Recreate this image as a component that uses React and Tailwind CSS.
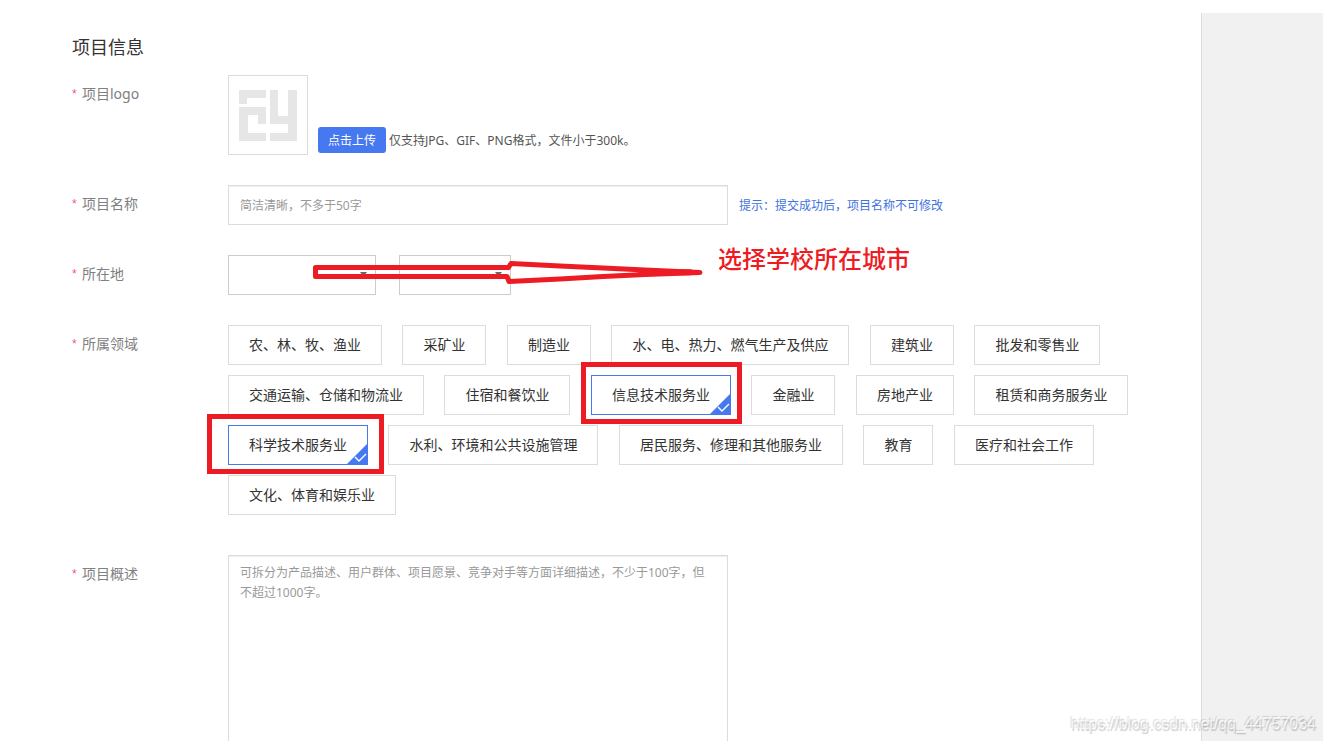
import React from 'react';

const FIELDS = [
  { name: '农、林、牧、渔业' },
  { name: '采矿业' },
  { name: '制造业' },
  { name: '水、电、热力、燃气生产及供应' },
  { name: '建筑业' },
  { name: '批发和零售业' },
  { name: '交通运输、仓储和物流业' },
  { name: '住宿和餐饮业' },
  { name: '信息技术服务业', mark: '-left-[11px] -right-3 -top-[14px] -bottom-[10px]' },
  { name: '金融业' },
  { name: '房地产业' },
  { name: '租赁和商务服务业' },
  { name: '科学技术服务业', mark: '-left-[22px] -right-[17px] -top-3 -bottom-[10px]' },
  { name: '水利、环境和公共设施管理' },
  { name: '居民服务、修理和其他服务业' },
  { name: '教育' },
  { name: '医疗和社会工作' },
  { name: '文化、体育和娱乐业' },
];

function Row({ label, htmlFor, children }) {
  const Tag = htmlFor ? 'label' : 'span';
  return (
    <div className="flex items-start">
      <Tag
        htmlFor={htmlFor}
        className="flex w-[156px] shrink-0 items-center text-sm leading-[38px] text-[#808080]"
      >
        <span className="w-[10px] font-['Liberation_Sans',sans-serif] text-xs leading-[34px] text-[#f5577a]">
          *
        </span>
        {label}
      </Tag>
      <div className="min-w-0 flex-1">{children}</div>
    </div>
  );
}

function LogoMark() {
  return (
    <svg width="58" height="51" viewBox="0 0 58 51" fill="#e6e6e6" aria-hidden="true">
      <path d="M0 0H27V8H8V14H0Z" />
      <path d="M0 17H27V34H19V25H9V43H27V51H0Z" />
      <path d="M31 0H39V26H49V0H58V51H31V43H49V34H31Z" />
    </svg>
  );
}

function FieldOption({ name, mark }) {
  const id = 'field-' + name;
  return (
    <label
      htmlFor={id}
      className="relative mr-[17px] mb-[10px] inline-block h-10 cursor-pointer border border-[#dcdcdc] px-5 align-top leading-[38px] text-[#333] has-checked:border-[#4678f0]"
    >
      <input id={id} type="checkbox" defaultChecked={!!mark} className="peer sr-only" />
      {name}
      <svg
        className="absolute right-0 bottom-0 hidden peer-checked:block"
        width="20"
        height="20"
        viewBox="0 0 20 20"
        aria-hidden="true"
      >
        <path d="M20 0V20H0Z" fill="#4678f0" />
        <path d="M8 13L12 17L19 10" fill="none" stroke="#fff" strokeWidth="1.4" />
      </svg>
      {mark && (
        <span className={'pointer-events-none absolute z-10 border-5 border-[#ed1c24] ' + mark} />
      )}
    </label>
  );
}

function Picker({ label, className }) {
  return (
    <div className={'relative h-10 ' + className}>
      <select aria-label={label} className="h-full w-full appearance-none border border-[#ccc] bg-white" />
      <svg
        className="pointer-events-none absolute top-[17px] right-[9px]"
        width="7"
        height="4"
        viewBox="0 0 7 4"
        aria-hidden="true"
      >
        <path d="M0 0H7L4 4H3Z" fill="#666" />
      </svg>
    </div>
  );
}

export default function App() {
  return (
    <div className="flex h-screen overflow-hidden bg-white pt-[13px] pr-[3px] pb-[3px] font-['Noto_Sans','Noto_Sans_CJK_SC',sans-serif]">
      <main className="min-w-0 flex-1 overflow-hidden pt-5 pr-5 pl-[72px]">
        <h1 className="mb-[14px] text-lg leading-7 text-[#333]">项目信息</h1>
        <form className="flex flex-col gap-[30px]">
          <Row label="项目logo">
            <div className="flex items-end">
              <div className="flex h-20 w-20 items-center justify-center border border-[#dcdcdc]">
                <LogoMark />
              </div>
              <button
                type="button"
                className="mb-[2px] ml-[10px] h-[26px] rounded-[3px] bg-[#4678f0] px-[10px] text-xs leading-7 text-white"
              >
                点击上传
              </button>
              <span className="ml-[3px] text-xs leading-7 text-[#555]">
                仅支持JPG、GIF、PNG格式，文件小于300k。
              </span>
            </div>
          </Row>

          <Row label="项目名称" htmlFor="project-name">
            <div className="flex items-center">
              <input
                id="project-name"
                type="text"
                placeholder="简洁清晰，不多于50字"
                className="h-10 w-[500px] border border-[#dcdcdc] px-[11px] text-xs shadow-[inset_0_1px_1px_#eee] placeholder:text-[#999]"
              />
              <span className="ml-[11px] pt-[2px] text-xs text-[#3f72e0]">
                提示：提交成功后，项目名称不可修改
              </span>
            </div>
          </Row>

          <Row label="所在地">
            <div className="relative flex gap-[23px]">
              <Picker label="省份" className="w-[148px]" />
              <Picker label="城市" className="w-[112px]" />
              <svg
                className="pointer-events-none absolute top-0 left-20"
                width="400"
                height="40"
                viewBox="308 255 400 40"
                fill="none"
                stroke="#ed1c24"
                strokeWidth="5"
                strokeLinecap="round"
                strokeLinejoin="round"
                aria-hidden="true"
              >
                <path d="M508 267.5H315.5V276.5H507L509 281.5L560 279L603 276.5L645 274.5L700 272.5L645 270L603 268L560 266L511 263.5L508.500 267.5" />
                <path d="M645 272.3H690" strokeWidth="6" />
              </svg>
              <p className="absolute -top-3 left-[490px] text-2xl leading-8 font-medium whitespace-nowrap text-[#ed1c24]">
                选择学校所在城市
              </p>
            </div>
          </Row>

          <Row label="所属领域">
            <div className="font-[Roboto,'Noto_Sans_CJK_SC',sans-serif] text-sm">
              {FIELDS.map((field) => (
                <React.Fragment key={field.name}>
                  <FieldOption {...field} />{' '}
                </React.Fragment>
              ))}
            </div>
          </Row>

          <Row label="项目概述" htmlFor="project-summary">
            <textarea
              id="project-summary"
              placeholder="可拆分为产品描述、用户群体、项目愿景、竞争对手等方面详细描述，不少于100字，但不超过1000字。"
              className="block h-[300px] w-[500px] resize-none border border-[#dcdcdc] px-[11px] py-[7px] text-xs leading-5 shadow-[inset_0_1px_1px_#eee] placeholder:text-[#999]"
            />
          </Row>
        </form>
      </main>
      <aside className="w-[122px] shrink-0 border-l border-[#dcdcdc] bg-[#f1f1f1]" />
      <p className="absolute right-[10px] bottom-2 font-['Liberation_Sans',sans-serif] text-base leading-6 text-white/70 [text-shadow:-1px_-1px_1px_#0002,1px_2px_1px_#0003]">
        https://blog.csdn.net/qq_44757034
      </p>
    </div>
  );
}
